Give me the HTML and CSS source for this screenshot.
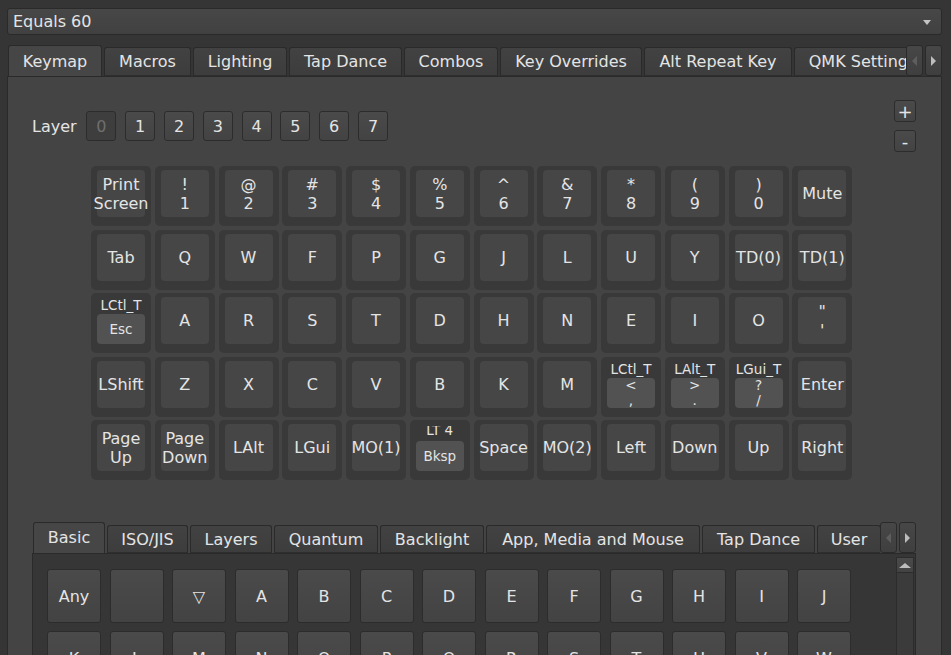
FILE: index.html
```html
<!DOCTYPE html>
<html lang="en">
<head>
    <meta charset="UTF-8">
    <title>Vial</title>
    <link rel="stylesheet" href="styles.css">
</head>
<body>
<div class="app">
    <div class="combo">
        <span>Equals 60</span>
        <span class="combo-arrow"></span>
    </div>

    <div class="tabs main-tabs">
        <div class="tab-strip">
            <div class="tab active">Keymap</div>
            <div class="tab">Macros</div>
            <div class="tab">Lighting</div>
            <div class="tab">Tap Dance</div>
            <div class="tab">Combos</div>
            <div class="tab">Key Overrides</div>
            <div class="tab">Alt Repeat Key</div>
            <div class="tab">QMK Settings</div>
        </div>
        <div class="scroll-btn"><span class="arrow left dim"></span></div>
        <div class="scroll-btn"><span class="arrow right"></span></div>
    </div>

    <div class="pane">
        <div class="layer-bar">
            <div class="layers">
                <span class="layer-label">Layer</span>
                <div class="btn layer-btn current">0</div>
                <div class="btn layer-btn">1</div>
                <div class="btn layer-btn">2</div>
                <div class="btn layer-btn">3</div>
                <div class="btn layer-btn">4</div>
                <div class="btn layer-btn">5</div>
                <div class="btn layer-btn">6</div>
                <div class="btn layer-btn">7</div>
            </div>
            <div class="layer-edit">
                <div class="btn small">+</div>
                <div class="btn small">-</div>
            </div>
        </div>

        <div class="keyboard">
            <!-- row 1 -->
            <div class="key"><div class="cap">Print<br>Screen</div></div>
            <div class="key"><div class="cap">!<br>1</div></div>
            <div class="key"><div class="cap">@<br>2</div></div>
            <div class="key"><div class="cap">#<br>3</div></div>
            <div class="key"><div class="cap">$<br>4</div></div>
            <div class="key"><div class="cap">%<br>5</div></div>
            <div class="key"><div class="cap">^<br>6</div></div>
            <div class="key"><div class="cap">&amp;<br>7</div></div>
            <div class="key"><div class="cap">*<br>8</div></div>
            <div class="key"><div class="cap">(<br>9</div></div>
            <div class="key"><div class="cap">)<br>0</div></div>
            <div class="key"><div class="cap">Mute</div></div>
            <!-- row 2 -->
            <div class="key"><div class="cap">Tab</div></div>
            <div class="key"><div class="cap">Q</div></div>
            <div class="key"><div class="cap">W</div></div>
            <div class="key"><div class="cap">F</div></div>
            <div class="key"><div class="cap">P</div></div>
            <div class="key"><div class="cap">G</div></div>
            <div class="key"><div class="cap">J</div></div>
            <div class="key"><div class="cap">L</div></div>
            <div class="key"><div class="cap">U</div></div>
            <div class="key"><div class="cap">Y</div></div>
            <div class="key"><div class="cap">TD(0)</div></div>
            <div class="key"><div class="cap">TD(1)</div></div>
            <!-- row 3 -->
            <div class="key tap"><div class="hold">LCtl_T</div><div class="tapbox">Esc</div></div>
            <div class="key"><div class="cap">A</div></div>
            <div class="key"><div class="cap">R</div></div>
            <div class="key"><div class="cap">S</div></div>
            <div class="key"><div class="cap">T</div></div>
            <div class="key"><div class="cap">D</div></div>
            <div class="key"><div class="cap">H</div></div>
            <div class="key"><div class="cap">N</div></div>
            <div class="key"><div class="cap">E</div></div>
            <div class="key"><div class="cap">I</div></div>
            <div class="key"><div class="cap">O</div></div>
            <div class="key"><div class="cap">"<br>'</div></div>
            <!-- row 4 -->
            <div class="key"><div class="cap">LShift</div></div>
            <div class="key"><div class="cap">Z</div></div>
            <div class="key"><div class="cap">X</div></div>
            <div class="key"><div class="cap">C</div></div>
            <div class="key"><div class="cap">V</div></div>
            <div class="key"><div class="cap">B</div></div>
            <div class="key"><div class="cap">K</div></div>
            <div class="key"><div class="cap">M</div></div>
            <div class="key tap"><div class="hold">LCtl_T</div><div class="tapbox two">&lt;<br>,</div></div>
            <div class="key tap"><div class="hold">LAlt_T</div><div class="tapbox two">&gt;<br>.</div></div>
            <div class="key tap"><div class="hold">LGui_T</div><div class="tapbox two">?<br>/</div></div>
            <div class="key"><div class="cap">Enter</div></div>
            <!-- row 5 -->
            <div class="key"><div class="cap">Page<br>Up</div></div>
            <div class="key"><div class="cap">Page<br>Down</div></div>
            <div class="key"><div class="cap">LAlt</div></div>
            <div class="key"><div class="cap">LGui</div></div>
            <div class="key"><div class="cap">MO(1)</div></div>
            <div class="key tap"><div class="hold clipped">LT 4</div><div class="tapbox">Bksp</div></div>
            <div class="key"><div class="cap">Space</div></div>
            <div class="key"><div class="cap">MO(2)</div></div>
            <div class="key"><div class="cap">Left</div></div>
            <div class="key"><div class="cap">Down</div></div>
            <div class="key"><div class="cap">Up</div></div>
            <div class="key"><div class="cap">Right</div></div>
        </div>

        <div class="picker">
            <div class="tabs sub-tabs">
                <div class="tab-strip">
                    <div class="tab active">Basic</div>
                    <div class="tab">ISO/JIS</div>
                    <div class="tab">Layers</div>
                    <div class="tab">Quantum</div>
                    <div class="tab">Backlight</div>
                    <div class="tab">App, Media and Mouse</div>
                    <div class="tab">Tap Dance</div>
                    <div class="tab">User</div>
                </div>
                <div class="scroll-btn"><span class="arrow left dim"></span></div>
                <div class="scroll-btn"><span class="arrow right"></span></div>
            </div>
            <div class="picker-pane">
                <div class="codes">
                    <div class="btn code">Any</div>
                    <div class="btn code"></div>
                    <div class="btn code">▽</div>
                    <div class="btn code">A</div>
                    <div class="btn code">B</div>
                    <div class="btn code">C</div>
                    <div class="btn code">D</div>
                    <div class="btn code">E</div>
                    <div class="btn code">F</div>
                    <div class="btn code">G</div>
                    <div class="btn code">H</div>
                    <div class="btn code">I</div>
                    <div class="btn code">J</div>
                    <div class="btn code">K</div>
                    <div class="btn code">L</div>
                    <div class="btn code">M</div>
                    <div class="btn code">N</div>
                    <div class="btn code">O</div>
                    <div class="btn code">P</div>
                    <div class="btn code">Q</div>
                    <div class="btn code">R</div>
                    <div class="btn code">S</div>
                    <div class="btn code">T</div>
                    <div class="btn code">U</div>
                    <div class="btn code">V</div>
                    <div class="btn code">W</div>
                </div>
                <div class="scrollbar">
                    <div class="sb-up"><span class="arrow up"></span></div>
                </div>
            </div>
        </div>
    </div>
</div>
</body>
</html>
```

FILE: styles.css
```css
* {
    box-sizing: border-box;
}
body {
    margin: 0;
    width: 951px;
    height: 655px;
    overflow: hidden;
    background-color: #353535;
    color: #e4e4e4;
    font-family: "DejaVu Sans", sans-serif;
    font-size: 16px;
}
.app {
    padding: 8px 9px 0 7px;
}

/* device selector */
.combo {
    height: 27px;
    display: flex;
    align-items: center;
    justify-content: space-between;
    padding: 0 10px 0 5px;
    background: linear-gradient(#474747, #414141);
    border: 1px solid #2a2a2a;
    border-radius: 3px;
}
.combo-arrow {
    border-left: 4px solid transparent;
    border-right: 4px solid transparent;
    border-top: 5px solid #c4c4c4;
    margin-top: 1px;
}

/* tab bars */
.tabs {
    display: flex;
    align-items: flex-end;
    height: 31px;
    padding-left: 1px;
    position: relative;
    z-index: 1;
}
.main-tabs {
    margin-top: 10px;
}
.tab-strip {
    flex: 1;
    display: flex;
    align-items: flex-end;
    gap: 2px;
    height: 100%;
    overflow: hidden;
}
.tab {
    flex: none;
    height: 29px;
    padding: 0 13.75px;
    display: flex;
    align-items: center;
    justify-content: center;
    background: linear-gradient(#424242, #3d3d3d);
    border: 1px solid #2a2a2a;
    border-bottom-color: #2e2e2e;
    border-radius: 3px 3px 0 0;
    white-space: nowrap;
}
.tab.active {
    height: 32px;
    margin-bottom: -1px;
    padding-bottom: 1px;
    background: #464646;
    border-bottom: none;
}
/* Qt sizes each tab from its hinted text width */
.main-tabs .tab:nth-child(1) { width: 94px; }
.main-tabs .tab:nth-child(2) { width: 87px; }
.main-tabs .tab:nth-child(3) { width: 94px; }
.main-tabs .tab:nth-child(4) { width: 113px; }
.main-tabs .tab:nth-child(5) { width: 94px; }
.main-tabs .tab:nth-child(6) { width: 142px; }
.main-tabs .tab:nth-child(7) { width: 148px; }
.main-tabs .tab:nth-child(8) { justify-content: flex-start; }

.scroll-btn {
    flex: none;
    width: 17px;
    height: 31px;
    margin-left: 2px;
    display: flex;
    align-items: center;
    justify-content: center;
    background: linear-gradient(#474747, #3f3f3f);
    border: 1px solid #2a2a2a;
    border-radius: 3px;
}
.tab-strip + .scroll-btn {
    margin-left: 0;
}
.arrow {
    width: 0;
    height: 0;
    border-top: 5px solid transparent;
    border-bottom: 5px solid transparent;
}
.arrow.left {
    border-right: 5px solid #bdbdbd;
}
.arrow.right {
    border-left: 5px solid #bdbdbd;
}
.arrow.dim {
    border-right-color: #5e5e5e;
}
.arrow.up {
    border: none;
    border-left: 6px solid transparent;
    border-right: 6px solid transparent;
    border-bottom: 5px solid #bdbdbd;
}

/* main pane */
.pane {
    height: 600px;
    padding: 23px 25px 0 24px;
    background-color: #444444;
    border: 1px solid #2a2a2a;
}
.layer-bar {
    height: 54px;
    display: flex;
    align-items: center;
    justify-content: space-between;
}
.layers {
    display: flex;
    align-items: center;
    gap: 8.8px;
    margin-bottom: 2px;
}
.layer-label {
    margin-right: 1px;
}
.btn {
    display: flex;
    align-items: center;
    justify-content: center;
    background: linear-gradient(#4a4a4a, #434343);
    border: 1px solid #2c2c2c;
    border-radius: 3px;
}
.layer-btn {
    width: 30px;
    height: 30px;
}
.layer-btn.current {
    background: #3e3e3e;
    color: #6f6f6f;
}
.layer-edit {
    display: flex;
    flex-direction: column;
    gap: 8px;
    margin-bottom: 2px;
}
.btn.small {
    width: 22px;
    height: 22px;
    font-size: 18px;
}

/* keyboard */
.keyboard {
    display: grid;
    grid-template-columns: repeat(12, 60px);
    grid-auto-rows: 60px;
    column-gap: 3.75px;
    row-gap: 3.5px;
    margin: 12px 0 0 59px;
}
.key {
    background-color: #393939;
    border-radius: 5px;
    padding: 4px 6px 9px;
    text-align: center;
    line-height: 19px;
}
.cap {
    height: 100%;
    display: flex;
    align-items: center;
    justify-content: center;
    background-color: #464646;
    border-radius: 4px;
    white-space: nowrap;
}
.key.tap {
    padding: 0 6px 9px;
    display: flex;
    flex-direction: column;
    font-size: 13.5px;
    line-height: 14px;
}
.hold {
    flex: none;
    height: 21px;
    padding-top: 5px;
    white-space: nowrap;
    margin: 0 -6px;
}
.hold.clipped {
    padding-top: 3px;
    clip-path: inset(6px 0 0 0);
}
.tapbox {
    flex: 1;
    min-height: 0;
    display: flex;
    align-items: center;
    justify-content: center;
    padding-bottom: 1px;
    background-color: #525252;
    border-radius: 4px;
}
.tapbox.two {
    line-height: 14.5px;
    padding: 0;
}

/* keycode picker */
.picker {
    margin-top: 42px;
}
.sub-tabs .tab {
    height: 28px;
    padding: 0 13px;
}
.sub-tabs .tab.active {
    height: 32px;
    padding-bottom: 2px;
}
.sub-tabs .tab:nth-child(1) { width: 72px; }
.sub-tabs .tab:nth-child(2) { width: 81px; }
.sub-tabs .tab:nth-child(3) { width: 82px; }
.sub-tabs .tab:nth-child(4) { width: 104px; }
.sub-tabs .tab:nth-child(5) { width: 104px; }
.sub-tabs .tab:nth-child(6) { width: 214px; }
.sub-tabs .tab:nth-child(7) { width: 113px; }
.sub-tabs .tab:nth-child(8) { width: 64px; }

.picker-pane {
    height: 200px;
    display: flex;
    justify-content: space-between;
    padding: 15px 1px 0 14px;
    background-color: #363636;
    border: 1px solid #2a2a2a;
}
.codes {
    display: grid;
    grid-template-columns: repeat(13, 54px);
    grid-auto-rows: 54px;
    column-gap: 8.5px;
    row-gap: 8px;
    align-content: start;
}
.btn.code {
    border-radius: 3px;
}
.scrollbar {
    width: 18px;
    margin-top: -12px;
    background-color: #3b3b3b;
    border: 1px solid #2c2c2c;
}
.sb-up {
    height: 15px;
    display: flex;
    align-items: center;
    justify-content: center;
    background: linear-gradient(#4a4a4a, #434343);
    border-bottom: 1px solid #2c2c2c;
}
```
